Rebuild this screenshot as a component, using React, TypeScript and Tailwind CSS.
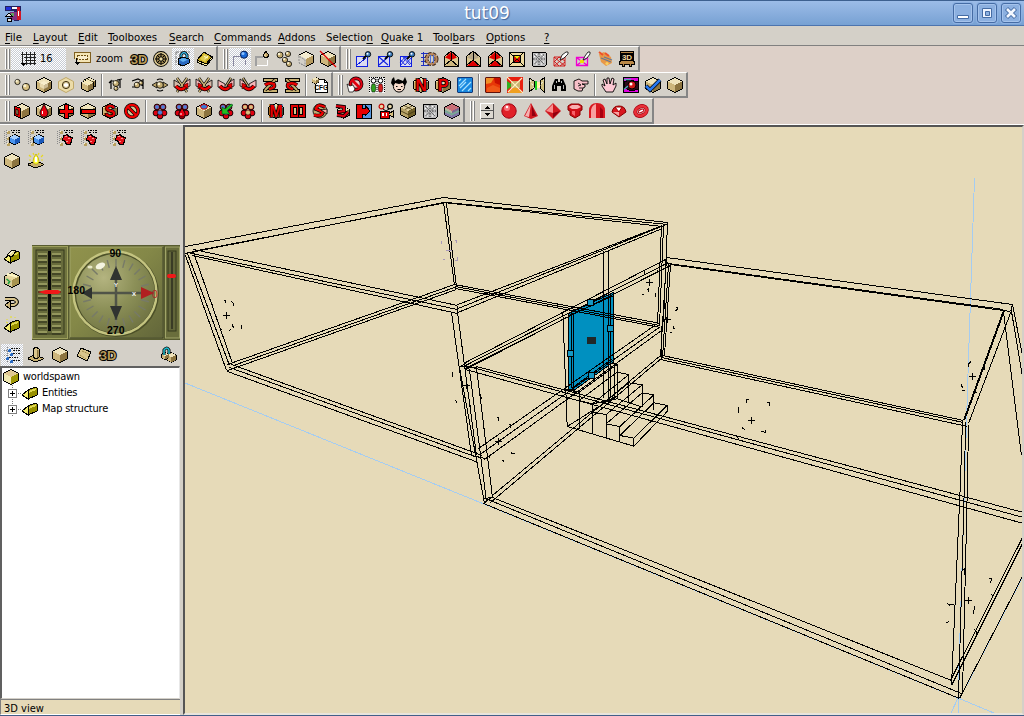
import React from "react";

type P = { d: string; f?: string; s?: string; w?: number };
const Pa = ({ d, f = "none", s = "#000", w = 1 }: P) => <path d={d} fill={f} stroke={s} strokeWidth={w} shapeRendering={w === 1 ? "crispEdges" : undefined} />;

const Letter = ({ t, c = "#e80000", size = 16, x = 8, y = 13.5, o = "#000", w = 1.6 }: { t: string; c?: string; size?: number; x?: number; y?: number; o?: string; w?: number }) => (
  <text x={x} y={y} fontFamily="Liberation Sans, sans-serif" fontWeight="700" fontSize={size} textAnchor="middle" fill={c} stroke={o} strokeWidth={w} paintOrder="stroke">{t}</text>
);

const Cube = ({ c = ["#f0e4bc", "#cdb67c", "#8c7440"], x = 0, y = 0, k = 1 }: { c?: string[]; x?: number; y?: number; k?: number }) => (
  <g transform={`translate(${x} ${y}) scale(${k})`} shapeRendering="crispEdges">
    <path d="M8 0L16 4V12L8 16L0 12V4Z" fill="#000" />
    <path d="M8 1L15 4.5L8 8L1 4.5Z" fill={c[0]} />
    <path d="M1 4.5L8 8V15L1 11.5Z" fill={c[1]} />
    <path d="M15 4.5L8 8V15L15 11.5Z" fill={c[2]} />
  </g>
);
const BLUE = ["#a8d0ff", "#4a94ee", "#1a58b8"];

const Ball = ({ x, y, r = 2.5, c = "#c4ac70" }: { x: number; y: number; r?: number; c?: string }) => (
  <g><circle cx={x} cy={y} r={r} fill={c} stroke="#000" strokeWidth=".8" /><circle cx={x - r / 3} cy={y - r / 3} r={r / 2.4} fill="#f8f0d0" /></g>
);

const RotX = ({ flip = false, v = 0 }: { flip?: boolean; v?: number }) => (
  <g transform={flip ? "translate(16 0) scale(-1 1)" : undefined}>
    <Pa d="M0 3L7 7V12L0 10Z" f={v ? "#f4b8b8" : "#d4b8a8"} w={.8} />
    <Pa d="M16 2L9 7V12L16 9Z" f="#f4b8b8" w={.8} />
    <Pa d={v ? "M13 1L8 9" : "M3 1L13 15M13 1L3 15"} s="#000" w={2.6} />
    <Pa d={v ? "M13 1L8 9" : "M3 1L13 15M13 1L3 15"} s="#cdb67c" w={1.3} />
    <Pa d="M2 9Q7 15.5 12.5 9" w={4} /><Pa d="M2 9Q7 15.5 12.5 9" s="#f00000" w={2.6} />
    <Pa d="M9 8L14 6V12Z" f="#f00000" w={.5} />
  </g>
);
const RotZ = ({ flip = false }: { flip?: boolean }) => (
  <g transform={flip ? "translate(16 0) scale(-1 1)" : undefined}>
    <Pa d="M1 1H15V4H1ZM1 12H15V15H1Z" f="#c8b070" />
    <Pa d="M13 3L3 13" w={3.6} /><Pa d="M13 3L3 13" s="#c8b070" w={2} />
    <Pa d="M3 8Q7 5 12 7Q14 11 7 12" w={3.6} /><Pa d="M3 8Q7 5 12 7Q14 11 7 12" s="#e80000" w={2.4} />
  </g>
);
const House = ({ top, bot }: { top: string; bot: string }) => (
  <g><Pa d="M8 0L15 6V15H1V6Z" f="#dcc890" /><path d="M8 1L14 6.5L8 9L2 6.5Z" fill={top} /><path d="M8 9.5L14 15H2Z" fill={bot} /><Pa d="M8 1V9M1 15L8 9L15 15" /></g>
);
const Molecule = ({ c = "#4a80d8" }: { c?: string }) => (
  <g>{[[5, 4], [11, 4], [4, 10], [12, 10], [8, 13]].map(([x, y]) => <circle key={`${x}${y}`} cx={x} cy={y} r="2.9" fill="#e00010" stroke="#000" strokeWidth=".9" />)}
    <circle cx="5" cy="4" r="2" fill={c} /><circle cx="11" cy="4" r="2" fill={c} /><circle cx="8" cy="9.5" r="2.6" fill={c} stroke="#500" strokeWidth=".8" /></g>
);
const Patch = ({ n }: { n: number }) => (
  <g><Pa d="M1 5H12V15H1Z" f="#dcdcf0" s="#1020e0" />
    {n === 0 && <Pa d="M2 14L11 7" s="#1020e0" />}
    {n === 1 && <Pa d="M2 6L11 14M11 6L2 14" s="#1020e0" w={1.1} />}
    {n === 2 && <Pa d="M1 8L6 14L12 7M1 12L6 6L12 13M3 5L11 14M9 5L2 14" s="#1020e0" w={.9} />}
    <Pa d="M8 8L11 5" w={1.8} /><circle cx="13" cy="3.3" r="2.7" fill="#3878b8" stroke="#000" strokeWidth=".9" /><circle cx="12.5" cy="2.8" r="1" fill="#fff" /></g>
);
const Hatch = () => (
  <g><Pa d="M2 1H14L15 2V14L14 15H2L1 14V2Z" f="#c0c0c0" /><path d="M3.5 3.5L13 13M13 3.5L3.5 13M8 2V6M8 10V14M2 8H6M10 8H14" stroke="#333" strokeDasharray="1.6 1.2" /><path d="M5 3.5H6M10 3.5H11M3 5.5H4M12 5.5H13M3 11H4M12 11H13M5 13H6M10 13H11" stroke="#fff" /></g>
);
const ListIcon = ({ red = false }: { red?: boolean }) => (
  <g shapeRendering="crispEdges"><path d="M.5 1V15M2.5 0V14" stroke="#8a8a8a" strokeDasharray="1 1" /><path d="M3 2H6M3 8H5M3 14H6" stroke="#b8a060" strokeWidth="3" /><path d="M3 1H4M3 7H4M3 13H4" stroke="#fff4d0" /><path d="M7 .5H16" stroke="#000" strokeDasharray="1 1 2 1" /><path d="M8 2.5H16" stroke="#000" strokeDasharray="2 2 1 1" />
    {red ? <g><path d="M6 5L11 4L12 6L16 7L14 15L9 15L8 12L5 11Z" fill="#000" /><path d="M7 6L10 5L11 7L15 8L13 14L10 14L9 11L6 10Z" fill="#e01018" /><path d="M8 6.5H10M11 8.5H13M9 11.5H11" stroke="#ff9090" /></g> : <Cube c={BLUE} x={5} y={4} k={.7} />}
  </g>
);
const Wedge = () => <g shapeRendering="crispEdges"><Pa d="M0 10L6 5V14Z" f="#f4ec70" /><Pa d="M6 5L13 2L15 3V10L6 14Z" f="#989000" /><path d="M7 6L14 3V5L7 8Z" fill="#e0d850" /></g>;

const icons: Record<string, React.ReactNode> = {
  grid: <g shapeRendering="crispEdges"><path d="M2.5 1V13M6.5 1V14M10.5 1V14M14.5 1V14M1 3.5H16M4 6.5H16M5 9.5H16M5 12.5H16" stroke="#222" /><path d="M0 12H6L3 15Z" fill="#000" /></g>,
  zoomrect: <g shapeRendering="crispEdges"><path d="M0 1H17V12H5V11H16V2H1V8H0Z" fill="#806020" /><path d="M1 2H16V11H4V8H1Z" fill="#f4e4b4" /><path d="M3.5 4.5H13.5V8.5H3.5Z" fill="#f8eccc" stroke="#705010" strokeDasharray="2 1" /><path d="M2.5 7V13" stroke="#000" /><path d="M0 11H6L3 14Z" fill="#000" /></g>,
  three: <Letter t="3D" c="#b89a58" size={13} y={12.5} w={2} />,
  wheel: <g><circle cx="8" cy="8" r="6.2" fill="#a08850" stroke="#000" strokeWidth="3.4" /><circle cx="8" cy="8" r="6.2" fill="none" stroke="#dcc890" strokeWidth="1.6" /><path d="M8 2V14M2 8H14M4 4L12 12M12 4L4 12" stroke="#000" strokeWidth="1" /><circle cx="8" cy="8" r="2.2" fill="#e8d8a0" stroke="#000" /></g>,
  lock: <g><path d="M1 1H15M1 1V14" stroke="#777" strokeDasharray="3 1" /><Pa d="M6 8V4Q9 -1 12 4V8" w={3} /><Pa d="M6 8V4Q9 -1 12 4V8" s="#38b8e8" w={1.4} /><Pa d="M3 8L8 6L14 8V12L8 15L3 13Z" f="#2868c0" /><path d="M4 8.5L8 7L13 8.5L8 11Z" fill="#60b0f0" /></g>,
  book: <g><Pa d="M0 9L7 1L15 6L9 13Z" f="#c8a820" /><Pa d="M0 9V11L9 15L15 8V6L9 13Z" f="#fff0a0" /><path d="M3 8L7.5 2.5L12 5.5L8 11Z" fill="#e0cc50" /><path d="M7 5.5L11 7M7.5 8L11 5" stroke="#fff8c0" /></g>,
  selblue: <g><path d="M1.5 15V5.5H8M13.5 9V14" stroke="#8888a0" fill="none" shapeRendering="crispEdges" /><circle cx="12" cy="3.7" r="3.6" fill="#1868d8" stroke="#001040" strokeWidth=".9" /><circle cx="11" cy="2.5" r="1.5" fill="#88c0ff" /></g>,
  selcone: <g><path d="M1 5H9V7H3V15H1Z" fill="#a0a0a0" /><path d="M3 14.5H13.5V9" stroke="#fff" fill="none" /><Pa d="M12 0L15 5L12 7L9 5Z" f="#c0a060" /><path d="M11.5 2V6L10 5Z" fill="#fff0c0" /></g>,
  balls: <g><Ball x={4} y={4} r={3} /><Ball x={12} y={3} r={2.6} /><Ball x={9} y={9} r={2.6} /><Ball x={13} y={13} r={2.6} /></g>,
  openbox: <g><Cube c={["#f4ecd0", "#d4d0c8", "#b89c60"]} /><path d="M0 4L8 8V16L0 12Z" fill="#d4d0c8" /><path d="M1 5V11.5L7 15V9Z" fill="none" stroke="#909090" strokeDasharray="2 1" /></g>,
  nobox: <g><Cube /><path d="M0 0L16 16" stroke="#e00000" strokeWidth="1.2" /></g>,
  cube: <Cube />,
  patch0: <Patch n={0} />, patch1: <Patch n={1} />, patch2: <Patch n={2} />,
  gear: <g><path d="M0 2.5H8M0 6.5H7M0 10.5H7M0 14.5H8M2.5 1V15" stroke="#2030c0" shapeRendering="crispEdges" /><circle cx="10.5" cy="8" r="5" fill="none" stroke="#402818" strokeWidth="4" strokeDasharray="3 1" /><circle cx="10.5" cy="8" r="5" fill="none" stroke="#b88860" strokeWidth="2.2" /><path d="M9.5 4V12M12.5 4V12" stroke="#5070d8" /></g>,
  house1: <House top="#e00000" bot="#cdb67c" />, house2: <House top="#b8a888" bot="#e00000" />, house3: <House top="#e00000" bot="#e00000" />,
  frame: <g><Pa d="M0 1H15V15H0Z" f="#f0dca0" /><Pa d="M0 1L4 5M15 1L11 5M0 15L4 11M15 15L11 11" /><Pa d="M4 4H11V11H4Z" f="#e00000" /><path d="M5 5L11 11M11 5L5 11" stroke="#000" strokeWidth=".8" /><path d="M5 5H11L8 8Z" fill="#ffe000" /></g>,
  hatch: <Hatch />,
  penred: <g><path d="M1 6H12V15H1ZM1 6L12 15M12 6L1 15M6 6L12 10M1 10L6 15M6 6L1 11M12 11L7 15" stroke="#d01010" fill="none" strokeWidth=".9" /><Pa d="M7 9L9 4L13 1L15 1V3L11 7Z" f="#fff" w={.8} /></g>,
  penpink: <g><path d="M1.5 6.5H12.5V14.5H1.5ZM2 7L12 14M12 7L2 14" stroke="#f000d0" strokeWidth="1.3" fill="none" /><path d="M5 9H9V12H5Z" fill="#f0e000" /><Pa d="M8 9L10 5L13 1L15 1V3L12 7Z" f="#fff" w={.8} /></g>,
  palette: <g><path d="M2 3L7 1L14 6L15 12L9 15L4 11Z" fill="#e89848" /><path d="M2 1L6 4M8 2L12 5" stroke="#f05028" strokeWidth="2" /><path d="M4 7L14 11M7 6L15 9" stroke="#607898" strokeWidth="1.2" /><circle cx="10" cy="12.5" r="1.6" fill="#f8d060" /></g>,
  sign3d: <g><Pa d="M1 0H14V10H15V13H12V15H10V13H5V15H3V13H0V10H1Z" f="#b88848" /><path d="M2 2H14V10H2Z" fill="#000" /><Letter t="3D" c="#f0d8a0" size={8} y={9} o="none" w={0} /></g>,
  twocubes: <g><Ball x={3.5} y={5} r={2.6} c="#d8c898" /><Ball x={12} y={10} r={3.6} c="#d8c080" /></g>,
  cubehi: <g><Cube /><path d="M8 4L12 6V10L8 12L4 10V6Z" fill="#fff6d8" opacity=".55" /></g>,
  cubehole: <g><path d="M8 .5L15.5 4.5V11.5L8 15.5L.5 11.5V4.5Z" fill="#ecdca8" stroke="#c0a868" /><circle cx="8" cy="8" r="3.6" fill="#d8c898" stroke="#403010" /><path d="M6 7L8 6L10 7V9L8 10L6 9Z" fill="#fff" /></g>,
  cubestack: <g><Cube x={3} y={0} k={.8} /><Cube x={1} y={2} k={.82} /><path d="M3.5 3.5L10 7M6 2L13 5.5" stroke="#fff0b0" fill="none" /></g>,
  rl: <g><Pa d="M3 12V4L1 6M3 4H6M12 2V11M9 3L14 2" w={1.2} /><Ball x={8} y={6.5} r={3} /><Ball x={8} y={11.5} r={2} /></g>,
  rr: <g><Pa d="M2 4L8 2L12 4V9M13 2V12M2 10H6" w={1.2} /><Ball x={7} y={8} r={2.8} /><Ball x={11} y={6} r={2} /></g>,
  rc: <g><Pa d="M0 8L5 5V11ZM16 8L11 5V11Z" f="#bca468" w={.8} /><Ball x={8} y={8} r={3.3} /><Pa d="M5 13Q8 15 11 13M5 3Q8 1 11 3" w={1.2} /></g>,
  x1: <RotX />, x2: <RotX flip />, v1: <RotX v={1} />, v2: <RotX flip v={1} />, z1: <RotZ />, z2: <RotZ flip />,
  cfg: <g><Pa d="M3 2H12L15 5V15H3Z" f="#fff" /><Pa d="M12 2V5H15" /><Cube x={0} y={0} k={.45} /><Letter t="CFG" c="#000" size={6.5} x={9.3} y={12.5} w={0} o="none" /></g>,
  noq: <g><circle cx="9" cy="7" r="5.6" fill="#f4c8c8" stroke="#000" strokeWidth="3.6" /><circle cx="9" cy="7" r="5.6" fill="none" stroke="#e00010" strokeWidth="2.2" /><Pa d="M5 3L13 11" s="#e00010" w={2.6} /><Pa d="M0 7L3 9L6 8L8 12L6 15H2Z" f="#fff" w={.7} /></g>,
  people: <g><path d="M0 0H16V16H0Z" fill="#f4f4f4" /><path d="M.5 0V16M8 0V16M15.5 0V16M0 .5H16" stroke="#000" strokeDasharray="1 1" /><circle cx="4.5" cy="3.7" r="2.3" fill="#fff" stroke="#000" /><circle cx="11.5" cy="3.7" r="2.3" fill="#fff" stroke="#000" /><path d="M3 7H6L7 11L6 15H3L2 11Z" fill="#30a020" stroke="#000" strokeWidth=".5" /><path d="M10 7H13L14 11L13 15H10L9 11Z" fill="#d02020" stroke="#000" strokeWidth=".5" /></g>,
  face: <g><circle cx="8" cy="9.5" r="5.6" fill="#f8dccc" stroke="#000" /><path d="M0 6L1 2L3 0L4 4L7 2L12 4L14 0L16 5L14 9L12 6L8 7L4 6L2 9Z" fill="#000" /><path d="M5 9.5H6.5M10 9.5H11.5M6.5 12.5H10" stroke="#000" strokeWidth="1.1" /></g>,
  N: <g><Cube /><Letter t="N" /></g>, Pp: <g><Cube /><Letter t="P" /></g>,
  water: <g><path d="M1 0H15L16 1V15L15 16H1L0 15V1Z" fill="#103878" /><path d="M1 1H15V15H1Z" fill="#1888e0" /><path d="M2 9L9 2M5 14L14 5M2 4L4 2M11 14L14 11M3 11L9 5" stroke="#a8e0ff" strokeWidth="1.2" /></g>,
  lava: <g><path d="M1 0H15L16 1V15L15 16H1L0 15V1Z" fill="#601008" /><path d="M1 1H15V15H1Z" fill="#e83808" /><path d="M1 1H9L6 6L1 7Z" fill="#f09028" /><path d="M9 1H15V8L10 6Z" fill="#c81000" /><path d="M2 11L8 8L15 11V15H2Z" fill="#f05818" /></g>,
  envelope: <g><path d="M0 0H16V16H0Z" fill="#e82010" /><path d="M0 4L6 8L0 13Z" fill="#30b020" /><path d="M1 16L8 9L15 16Z" fill="#f0a020" /><path d="M4 4H13V11H4Z" fill="#c8b070" /><path d="M0 0L16 16M15 1L1 15" stroke="#fff0c0" strokeWidth="1.2" /></g>,
  gate: <g><Pa d="M0 1L5 4V11L0 15ZM15 1L11 4V11L15 15Z" f="#d0c080" /><path d="M6 5H11V11H6Z" fill="#fff0a0" /><path d="M7 4V13" stroke="#20d020" strokeWidth="2" /><path d="M1 3L5 11M10 10L15 3" stroke="#fff" strokeDasharray="2 2" /></g>,
  binoc: <g><path d="M4 2H7V5H9V2H12L15 9V14H10V9H6V14H1V9Z" fill="#000" /><path d="M3.5 8V12M12.5 8V12M5.5 4V6M10.5 4V6" stroke="#bbb" /></g>,
  finger: <g><path d="M1 4L6 2L9 4H15V7H9L12 8V10L10 11L9 14H5L1 12Z" fill="#f8c0c8" stroke="#000" strokeWidth=".9" /><path d="M5 6L8 8L5 9M6 11H10" stroke="#000" strokeWidth=".8" fill="none" /></g>,
  hand: <path d="M5 15L1 9L1 7L4 9L2 3L4 2L6 7L6 1H8L9 7L11 1L13 2L12 8L15 6V9L12 15Z" fill="#fcc8d4" stroke="#000" strokeWidth=".9" />,
  eye: <g><path d="M0 0H16V16H0Z" fill="#000" /><path d="M1 1H15V15H1Z" fill="#e000e0" /><Pa d="M1 5L6 3L15 5V12L9 14L1 11Z" f="#300818" /><circle cx="9" cy="8" r="4" fill="#d01818" stroke="#000" /><circle cx="8" cy="7" r="1.5" fill="#fff" /><path d="M1 12.5L5 9M1 2.5H8" stroke="#50a8b8" strokeWidth="1.5" /></g>,
  check: <g><Cube /><Pa d="M1 9L5 13L15 3" w={4} /><Pa d="M1 9L5 13L15 3" s="#2878f0" w={2.6} /></g>,
  rdoor: <g><Cube /><Pa d="M0 3L6 5V15L0 12Z" f="#e00000" /><Pa d="M2 6L4 7V12L2 11Z" f="#c8b070" w={.9} /></g>,
  drop: <g><Cube /><Pa d="M8 1L12 9Q12 14 8 14Q4 14 4 9Z" f="#e80010" w={.9} /><path d="M6.5 8V11" stroke="#fff" /></g>,
  plus: <g><Cube /><Pa d="M6 1H10V6H15V10H10V15H6V10H1V6H6Z" f="#f00000" /></g>,
  minus: <g><Cube /><Pa d="M1 6H15V10H1Z" f="#f00000" /></g>,
  S: <g><Cube /><Letter t="S" /></g>,
  forbid: <g><circle cx="8" cy="8" r="6.2" fill="#d8c898" stroke="#000" strokeWidth="3.6" /><Pa d="M4 4L12 12" w={3.6} /><circle cx="8" cy="8" r="6.2" fill="none" stroke="#f00000" strokeWidth="2.2" /><Pa d="M4 4L12 12" s="#f00000" w={2.2} /></g>,
  mol1: <Molecule />,
  mol2: <g><Molecule /><Pa d="M8 5L11 10Q12 14 8 14Q4 14 5 10Z" f="#e80010" w={.8} /><path d="M7 10V12" stroke="#fff" /></g>,
  mol3: <g><Cube /><path d="M4 3L8 1L12 3L10 6H6Z" fill="#3878d8" stroke="#d00000" /></g>,
  mol4: <g><Molecule /><path d="M15 2L9 8L12 11H4V4L7 6L13 1Z" fill="#20c020" stroke="#042" strokeWidth=".6" /></g>,
  mol5: <Molecule c="#d8c080" />,
  M: <g><Cube /><Letter t="M" size={16} /></g>,
  door2: <g><Pa d="M0 1H15V14H0Z" f="#e00000" /><Pa d="M3 4H6V11H3ZM9 4H12V11H9Z" f="#d8c48c" /><Pa d="M8 1V14" /></g>,
  spin: <g><Ball x={8} y={8} r={7} /><Pa d="M13 4Q5 0 4 6L11 9Q10 14 2 12" w={3.8} /><Pa d="M13 4Q5 0 4 6L11 9Q10 14 2 12" s="#f00000" w={2.4} /><Pa d="M9 7L15 6V11Z" f="#f4b0a8" w={.8} /></g>,
  spin2: <g><Cube x={3} y={3} k={.8} /><Pa d="M2 3L10 4V8L4 9M3 12L10 13L14 9" w={3.8} /><Pa d="M2 3L10 4V8L4 9M3 12L10 13L14 9" s="#e00010" w={2.2} /></g>,
  arrow: <g><Pa d="M0 1H15V15H0Z" f="#5898e0" /><Pa d="M0 1H6V5H9V2L14 8L9 13V11H6V15H0Z" f="#e80000" /></g>,
  camera: <g><circle cx="3.5" cy="3.5" r="2.4" fill="#e8d8a8" stroke="#c00000" strokeWidth="1.2" /><circle cx="12" cy="3.5" r="2.4" fill="#e8d8a8" stroke="#000" strokeWidth="1.2" /><path d="M5 6L8 8L11 6" stroke="#000" fill="none" /><Pa d="M2 8H11V15H2Z" f="#e00000" /><path d="M4 10H6V13H4ZM8 10H9V13H8Z" fill="#fff" /><Pa d="M11 11L15 8V14L11 12" f="#d8c080" /></g>,
  crate: <g><Cube c={["#e0d0a0", "#b8a468", "#706028"]} /><path d="M4 2.5L12 6.5M5 6.5L12 3M1 8L8 11.5L15 8" stroke="#403410" strokeWidth=".8" fill="none" /></g>,
  rainbow: <g><Cube c={["#c87078", "#b8b8a0", "#806890"]} /><path d="M1 8L8 11.5L15 8" stroke="#78a898" strokeWidth="2" fill="none" /><path d="M1 10.5L8 14L15 10.5" stroke="#8078a8" strokeWidth="2" fill="none" /></g>,
  updown: <g shapeRendering="crispEdges"><path d="M1 0H15V16H1Z" fill="#fff" /><path d="M2 1H15V16H2Z" fill="#555" /><path d="M2 1H14V7H2ZM2 8H14V15H2Z" fill="#dcd8d0" /><path d="M5 6L8 3L11 6ZM5 10L8 13L11 10Z" fill="#000" /></g>,
  sphere: <g><circle cx="8" cy="8" r="7.2" fill="#e02028" stroke="#a00010" /><circle cx="6" cy="5" r="3" fill="#f87078" /><circle cx="6" cy="4" r="1.2" fill="#fff" /></g>,
  cone: <g><path d="M8 0L15 13L8 16L1 13Z" fill="#d01820" /><path d="M8 1L6 14L2 13Z" fill="#f8b0b0" /><path d="M9 3L13 13H9Z" fill="#900010" /></g>,
  octa: <g><path d="M8 0L16 8L8 16L0 8Z" fill="#d01820" /><path d="M8 1L1 8L8 10Z" fill="#f89090" /><path d="M8 15L8 10L15 8Z" fill="#900010" /></g>,
  cyl: <g><path d="M1 3L4 1H12L15 3V7L13 8V12L8 15L3 12V8L1 7Z" fill="#d01018" stroke="#800" /><path d="M2 4L5 2H11L14 4L10 6H5Z" fill="#f8b0b0" /><path d="M5 8H8V13L5 11Z" fill="#f86068" /></g>,
  arch: <g><path d="M0 15V8Q0 0 8 0Q16 0 16 8V15Z" fill="#d81820" /><path d="M2 15V7Q3 2 7 1V15Z" fill="#f8a0a0" /><path d="M11 15V4L14 7V15Z" fill="#a80010" /></g>,
  cut: <g><path d="M1 9Q2 3 8 3Q14 3 15 9L8 14Z" fill="#d81820" stroke="#800" /><path d="M4 4L8 9L11 4Z" fill="#fff" stroke="#a00" /><path d="M2 9L8 13V9Z" fill="#f8a0a0" /></g>,
  torus: <g transform="rotate(-25 8 8)"><ellipse cx="8" cy="8" rx="6" ry="4.6" fill="none" stroke="#a80010" strokeWidth="4" /><ellipse cx="8" cy="8" rx="6" ry="4.6" fill="none" stroke="#e83038" strokeWidth="2.6" /><ellipse cx="8" cy="8" rx="3" ry="1.4" fill="#fff" stroke="#c00010" /></g>,
  listb: <ListIcon />, listr: <ListIcon red />,
  bulb: <g><Pa d="M0 11L8 8L15 11V12L8 15L0 12Z" f="#c8b070" /><path d="M8 1Q11 5 11 8.5L9.5 11H6.5L5 8.5Q5 5 8 1Z" fill="#ffff40" stroke="#c0a800" strokeWidth=".8" /><path d="M7 4H9V9H7Z" fill="#fff" /><path d="M1 2L3 4M13 4L15 2M1 7H3M13 7H15M5 0L6 2M11 0L10 2" stroke="#e8d820" strokeWidth="1.2" /></g>,
  tcube: <Cube c={["#e0c894", "#f0e8b0", "#a09808"]} />,
  wedge: <Wedge />,
  folder: <g><Wedge /><Pa d="M3 6L8 1L12 2L8 8Z" f="#e8dc98" /><path d="M5 5.5L9 2" stroke="#fff" /></g>,
  bag: <g><Cube c={["#e8d8a0", "#d8cc98", "#a89450"]} /><path d="M3 2L13 4.5" stroke="#fff8c8" strokeWidth="2" /><path d="M2.5 7L5 9M6 9L4 12" stroke="#20a040" strokeWidth="1.6" /></g>,
  undo: <g><Pa d="M1 4H10Q16 7 10 10H6" w={4} /><Pa d="M1 4H10Q16 7 10 10H6" s="#d8c48c" w={2} /><Pa d="M6 6V14L1 10Z" f="#cdb67c" /></g>,
  spark: <g><Wedge /><path d="M3 1V2M7 -2V0M11 -1V0M2 4L4 5" stroke="#e8e020" /></g>,
  tree: <g shapeRendering="crispEdges"><path d="M3.5 0V16M0 3.5H4M0 8.5H4M0 12.5H4" stroke="#888" strokeDasharray="1 1" /><path d="M7 1.5H16M9 3.5H16M9 6.5H16M5 10.5H15M9 13.5H16" stroke="#111" strokeDasharray="2 1 1 1" /><path d="M4 2H7V5H4ZM6 6H9V9H6ZM2 10H5V13H2ZM6 13H9V16H6Z" fill="#2868c0" /><path d="M4 2H5V3H4ZM6 6H7V7H6ZM2 10H3V11H2ZM6 13H7V14H6Z" fill="#b0dcff" /></g>,
  chess: <g><Pa d="M0 11L6 8L15 11V12L8 15L0 12Z" f="#c8b070" /><Pa d="M5 2L8 0L11 2V10L8 12L5 10Z" f="#d8c48c" /><path d="M9 3V11L10.5 10V3Z" fill="#8c7440" /></g>,
  sheet: <g><Pa d="M5 1L15 5L11 14L1 9Z" f="#d8c48c" w={1} /><path d="M4 8L10 12M6 4L13 7" stroke="#a08848" strokeDasharray="2 1" /></g>,
  lockbox: <g><Cube x={5} y={5} k={.68} /><Cube x={0} y={5} k={.5} /><Pa d="M3 8V3Q6 -1 8 3V7" w={3} /><Pa d="M3 8V3Q6 -1 8 3V7" s="#20c0d0" w={1.5} /></g>,
};

const Icon = ({ n }: { n: string }) => <svg viewBox="0 0 16 16" className="h-4 w-4 shrink-0 overflow-visible">{icons[n]}</svg>;
const Slot = ({ n, on = false }: { n: string; on?: boolean }) => (
  <div className={`flex h-[22px] w-[22px] shrink-0 items-center justify-center ${on ? "bg-[repeating-conic-gradient(#ffffff_0_25%,#c8ccd4_0_50%)] bg-[length:2px_2px]" : ""}`}><Icon n={n} /></div>
);
const Sep = () => <div className="flex h-[22px] w-1.5 shrink-0 justify-center"><div className="w-px bg-[#808080]" /><div className="w-px bg-white" /></div>;
const Bar = ({ list, children }: { list?: string; children?: React.ReactNode }) => (
  <div className="flex h-[26px] shrink-0 items-center border-t border-r-2 border-b-2 border-t-white border-r-[#858585] border-b-[#858585] bg-[#d4d0c8]">
    <div className="flex h-5 w-[11px] shrink-0 gap-px pl-[5px]"><div className="w-0.5 border-r border-l border-r-[#808080] border-l-white" /><div className="w-0.5 border-r border-l border-r-[#808080] border-l-white" /></div>
    {children}
    {list?.split(" ").map((n, i) => n === "|" ? <Sep key={i} /> : <Slot key={i} n={n.replace("*", "")} on={n.startsWith("*")} />)}
  </div>
);

const menus: [string, string, string, string][] = [
  ["", "F", "ile", "w-[28px]"], ["", "L", "ayout", "w-[45px]"], ["", "E", "dit", "w-[30px]"], ["", "T", "oolboxes", "w-[61px]"],
  ["", "S", "earch", "w-[45px]"], ["", "C", "ommands", "w-[64px]"], ["", "A", "ddons", "w-[48px]"], ["Selectio", "n", "", "w-[55px]"],
  ["", "Q", "uake 1", "w-[52px]"], ["Tool", "b", "ars", "w-[53px]"], ["", "O", "ptions", "w-[58px]"], ["", "?", "", "w-[10px]"],
];

const lines: number[][] = [
  [185, 246, 443, 197], [443, 197, 667, 222], [185, 253, 443, 202], [192, 251, 446, 202], [443, 202, 662, 226], [446, 202, 667, 224],
  [193, 249, 457, 305], [187, 252, 457, 309], [192, 255, 457, 313], [185, 255, 226, 370], [187, 253, 229, 365], [193, 252, 232, 363],
  [227, 364, 454, 284], [233, 365, 457, 286], [227, 370, 456, 289], [231, 364, 482, 455], [229, 367, 477, 457], [227, 371, 478, 462],
  [443, 202, 454, 285], [446, 203, 456, 287], [454, 284, 660, 323], [455, 286, 659, 325], [455, 288, 660, 327],
  [661, 225, 657, 324], [663, 225, 659, 326], [667, 222, 663, 322], [661, 325, 661, 357],
  [455, 305, 662, 225], [455, 309, 666, 224], [455, 313, 662, 228], [451, 312, 471, 455], [457, 305, 457, 312], [457, 312, 476, 455],
  [465, 362, 667, 258], [465, 365, 668, 262], [465, 368, 670, 265], [465, 369, 566, 317],
  [666, 257, 1012, 304], [670, 264, 1010, 311], [668, 263, 1003, 309],
  [666, 258, 660, 357], [668, 264, 662, 357], [670, 264, 664, 355],
  [662, 355, 963, 420], [661, 357, 963, 422], [660, 359, 967, 426],
  [1003, 310, 963, 420], [1004, 310, 964, 420], [1011, 310, 968, 423], [1012, 304, 1010, 311],
  [1012, 304, 1023, 360], [1011, 311, 1023, 382], [1003, 311, 1021, 455],
  [962, 420, 960, 480], [960, 480, 951, 685], [968, 425, 967, 480], [967, 480, 962, 693], [965, 422, 964, 480], [964, 480, 958, 698],
  [492, 497, 951, 680], [485, 498, 961, 693], [483, 503, 959, 698],
  [959, 698, 1023, 574], [950, 680, 1023, 535], [951, 685, 1023, 541],
  [459, 367, 484, 503], [469, 369, 486, 501], [476, 367, 492, 497], [483, 503, 491, 497], [459, 367, 466, 362], [483, 498, 492, 497],
  [478, 448, 657, 323], [481, 453, 660, 326], [484, 459, 661, 330], [492, 495, 660, 355], [490, 502, 662, 357],
  [476, 366, 1023, 512], [472, 367, 1023, 517], [465, 369, 1023, 523], [459, 366, 476, 367], [471, 455, 485, 458],
  [603, 250, 603, 397], [608, 250, 608, 400],
];
const stairs =
  "M367 305L376 540L380 648L580 707V683L538 675V695M538 675V648L497 640V685M497 640V612L456 605V670M456 605V580L416 570M418 657L416 545L376 537M515 458L530 462V565M530 485L565 492V575M565 517L605 523V590M605 547L640 553V598M640 577L680 585V603L580 707M416 545L530 462M416 570L530 485M456 580L565 492M456 605L565 517M497 612L605 523M497 640L605 547M538 648L640 553M538 675L640 577M580 683L680 585M456 580L530 565L605 590M380 648L520 560M510 455V560M522 458V560";
const crosses = [[226, 315], [649, 282], [667, 319], [751, 420], [972, 376], [968, 600], [466, 385], [498, 441]];
const ticks =
  "M223 300h2v2M231 301l2 2v2M232 323v3l2 1M241 324v4M228 331l2-2M220 328l2 2M211 303l2 3M644 270v3M657 269v3M646 290l2-2v3M641 294h2M655 292v4M675 307h2v2l-2 1M674 328h-1v-3M665 307v5M669 332h2M738 406v6M746 402v-3h2M766 402h3v3M742 426v2l3 1M761 431l4 1v-3M735 436h2l1 3M970 361l-1 2h-1v3M961 383v3l2 1M961 390h3M975 391l1 2M984 365v4M452 371v5M480 393v4l2 1M468 394v4M470 404v4M455 400l2 3M498 420v-3h-2M508 424h2v3M484 427v5M511 451v2h3M502 460l2 1M488 456l2 1M988 578h3l-1 5M974 606l-1 8M947 603l3 3M948 604h5M946 622l3-1M974 629l2 2v3M962 570l2-2v6M991 594l2 3";

const Room = () => (
  <svg viewBox="185 127 837 586" width="837" height="586" shapeRendering="crispEdges" fill="none" className="block bg-[#e6dab8]">
    <path d="M974.5 178L968 374L958 698M185 383L484 504L958 698L951 713M958.5 698V713M958 698L994 713M960 698L1023 576" stroke="#a4ccf2" />
    <path d="M568 313L613 292V362L573 391L569 389Z" fill="#0090c0" />
    <g stroke="#000">
      {lines.map((l, i) => <line key={i} x1={l[0] + .5} y1={l[1] + .5} x2={l[2] + .5} y2={l[3] + .5} />)}
      <path d="M568.5 313.5L613.5 292.5V362L573 391L568.5 389ZM571.5 313V388M573.5 313V390M610.5 294V363M568 316L613 296M572 388L612 359" />
      <path d={stairs} transform="translate(440.5 210.5) scale(.33333)" vectorEffect="non-scaling-stroke" />
      {crosses.map(([x, y]) => <path key={x} d={`M${x - 3} ${y + .5}h7M${x + .5} ${y - 3}v7`} />)}
      <path d={ticks} transform="translate(.5 .5)" />
      <path d="M587.5 299.5h6v6h-6ZM607.5 325.5h6v6h-6ZM567.5 350.5h6v6h-6ZM588.5 372.5h6v6h-6Z" fill="#1698c4" />
    </g>
    <path d="M587 337h9v7h-9Z" fill="#202828" />
    <path d="M441 241v3M455 240h1v3M446 250h6M443 259h2M457 257v3h-2" stroke="#a898b8" />
  </svg>
);

const Compass = () => (
  <svg viewBox="0 0 148 95" width="148" height="95" className="block shrink-0">
    <defs>
      <linearGradient id="olive" x1="0" y1="0" x2="1" y2="1"><stop offset="0" stopColor="#90924c" /><stop offset=".45" stopColor="#848848" /><stop offset="1" stopColor="#62663a" /></linearGradient>
      <radialGradient id="dial" cx=".35" cy=".3" r=".8"><stop offset="0" stopColor="#b4b480" /><stop offset=".5" stopColor="#8c9058" /><stop offset="1" stopColor="#6c7040" /></radialGradient>
    </defs>
    <rect width="148" height="95" fill="#585c30" />
    <rect x=".5" y="1.5" width="35" height="92" fill="#70743f" stroke="#9c9f5c" />
    <rect x="4" y="5" width="28" height="84" fill="#686c3c" stroke="#34381c" />
    {Array.from({ length: 14 }, (_, i) => <path key={i} d={`M6 ${9 + i * 6}H15M20 ${9 + i * 6}H29`} stroke="#a3a568" strokeWidth="1.5" />)}
    {Array.from({ length: 14 }, (_, i) => <path key={i} d={`M6 ${11 + i * 6}H15M20 ${11 + i * 6}H29`} stroke="#3a3d20" strokeWidth="1.5" />)}
    <path d="M17.5 6V86" stroke="#080808" strokeWidth="3" />
    <path d="M6 47L14 45H26L29 47L26 49H13Z" fill="#f01818" />
    <rect x="38" y="2" width="93" height="91" fill="url(#olive)" stroke="#a0a468" />
    <path d="M38 93H131V2" stroke="#30341a" fill="none" />
    <circle cx="84" cy="49" r="43" fill="#4c5028" /><circle cx="83" cy="48" r="41.5" fill="none" stroke="#c4c480" strokeWidth="2.4" /><circle cx="83.5" cy="48.5" r="39.5" fill="url(#dial)" />
    {Array.from({ length: 24 }, (_, i) => <path key={i} d="M84 14V22" transform={`rotate(${i * 15} 84 48)`} stroke="#777a68" strokeWidth="1.4" />)}
    <ellipse cx="68" cy="21" rx="5" ry="3" fill="#f4f4e0" transform="rotate(-25 68 20)" /><ellipse cx="58" cy="22" rx="2.6" ry="1.5" fill="#e8e8c8" />
    <path d="M56 48H122M84 24V75" stroke="#505448" strokeWidth="2.5" />
    <path d="M78 35L84 21L90 35ZM78 61L84 75L90 61ZM60 42L50 48L60 54Z" fill="#303330" />
    <path d="M109 42L122 48L109 54Z" fill="#b02020" />
    <g fontFamily="Liberation Sans, sans-serif" fontWeight="700" fontSize="10.5">
      <text x="77.500" y="12">90</text><text x="35.500" y="49">180</text><text x="75" y="89">270</text><text x="120" y="53" fill="#b02828" fontWeight="400" fontSize="10.5">0</text>
      <text x="82" y="42" fill="#fff" fontSize="6">Y</text><text x="100" y="51" fill="#fff" fontSize="6">X</text>
    </g>
    <rect x="133.500" y="2" width="14" height="91" fill="#6a6e3c" stroke="#a0a468" /><rect x="136" y="6" width="8" height="80" fill="#62663a" stroke="#34381c" /><path d="M140 7V84" stroke="#101010" />
    <rect x="135" y="29" width="9" height="4" rx="2" fill="#f01818" />
  </svg>
);

const TreeRow = ({ label }: { label: string }) => (
  <div className="flex h-4 items-center pl-[5px]">
    <svg width="15" height="16" viewBox="0 0 15 16" shapeRendering="crispEdges" className="shrink-0"><path d="M5.5 0V16M9 8.500H15" stroke="#777" strokeDasharray="1 1" /><rect x="1.500" y="4.500" width="8" height="8" fill="#fff" stroke="#808080" /><path d="M3 8.500H8M5.500 6V11" stroke="#000" /></svg>
    <Icon n="wedge" /><span className="ml-[4px]">{label}</span>
  </div>
);

const WinBtn = ({ children }: { children: React.ReactNode }) => (
  <div className="flex h-5 w-5 items-center justify-center rounded-[3px] border border-[#456ca4] bg-[#8cb0e0] shadow-[0_0_0_1px_#8db1e2,inset_0_0_0_1px_#a5c3ec]"><svg width="14" height="14" viewBox="0 0 14 14" fill="none">{children}</svg></div>
);

export default function App() {
  return (
    <div className="flex h-[716px] w-[1024px] flex-col overflow-hidden bg-[#d4d0c8] font-['DejaVu_Sans_Condensed','DejaVu_Sans',sans-serif] text-[11px] leading-4 text-black">
      <header className="flex h-[26px] shrink-0 items-center border-t border-b border-t-[#3d6090] border-b-[#4c74ae] bg-linear-to-b from-[#9cbce8] to-[#77a1d3] pr-[3px] pl-[5px]">
        <svg viewBox="0 0 16 16" className="mt-0.5 h-4 w-4" shapeRendering="crispEdges"><path d="M0 0H16V5H14V15H9V5H0Z" fill="#202060" /><path d="M1 1H6V4H1Z" fill="#2030d8" /><path d="M7 1H12V3H7Z" fill="#fff" /><path d="M12 1H15V5H16V14H12Z" fill="#d01828" /><path d="M13 5H14V10H13Z" fill="#fff" /><path d="M5 6H12V14H5Z" fill="#803080" /><path d="M6 7H9V10H6Z" fill="#60a060" /><path d="M1 10L4 7L7 10ZM2 12H6V15H2Z" fill="#e0e0e0" stroke="#000" /></svg>
        <div className="flex-1 text-center font-['DejaVu_Sans'] text-[17px] leading-6 font-medium text-white [text-shadow:1px_1px_1px_#40649a]">tut09</div>
        <div className="flex gap-1"><WinBtn><path d="M1.500 9.500H12.500V12.500H1.500Z" fill="#fff" stroke="#456ca4" /></WinBtn><WinBtn><path d="M2.500 2.500H11.500V11.500H2.500Z" fill="#eef4ff" stroke="#456ca4" /><path d="M5.500 5.500H9.500V9.500H5.500Z" fill="#8cb0e0" stroke="#456ca4" /></WinBtn><WinBtn><path d="M2.500 2.500L11.500 11.500M11.500 2.500L2.500 11.500" stroke="#456ca4" strokeWidth="4.500" /><path d="M3 3L11 11M11 3L3 11" stroke="#f4f8ff" strokeWidth="2.600" /></WinBtn></div>
      </header>
      <nav className="flex h-5 shrink-0 items-center border-b border-[#808080] pt-[5px] pl-[5px]">
        {menus.map(([a, u, b, w], i) => <div key={i} className={`shrink-0 text-[11.3px] whitespace-nowrap ${w}`}>{a}<span className="underline underline-offset-2">{u}</span>{b}</div>)}
      </nav>
      <div className="h-[78px] shrink-0 bg-[#ddd0c8]">
        <div className="flex">
          <Bar>
            <div className="flex h-[22px] w-[55px] items-center gap-1 bg-[repeating-conic-gradient(#ffffff_0_25%,#c8ccd4_0_50%)] bg-[length:2px_2px] pl-[9px]"><Icon n="grid" />16</div>
            <div className="flex h-[22px] w-[62px] items-center gap-1.5 pl-2"><Icon n="zoomrect" />zoom</div>
            <Slot n="three" /><Slot n="wheel" /><Slot n="lock" on /><Slot n="book" />
          </Bar>
          <Bar list="*selblue selcone balls openbox nobox" />
          <Bar list="patch0 patch1 patch2 gear house1 house2 house3 frame hatch penred penpink palette sign3d" />
        </div>
        <div className="flex">
          <Bar list="twocubes cubehi cubehole cubestack | rl rr rc x1 x2 v1 v2 z1 z2 | cfg" />
          <Bar list="noq people face N Pp water | lava envelope gate binoc finger | hand eye check cube" />
        </div>
        <div className="flex">
          <Bar list="rdoor drop plus minus S forbid | mol1 mol2 mol3 mol4 mol5 | M door2 spin spin2 arrow camera crate hatch rainbow" />
          <Bar list="updown sphere cone octa cyl arch cut torus" />
        </div>
      </div>
      <div className="flex min-h-0 flex-1 border-t border-white">
        <aside className="flex w-[183px] shrink-0 flex-col">
          <div className="flex h-6 items-center pt-0.5 pl-1"><Icon n="listb" /><div className="w-2" /><Icon n="listb" /><div className="w-[13px]" /><Icon n="listr" /><div className="w-2" /><Icon n="listr" /><div className="w-[13px]" /><Icon n="listr" /></div>
          <div className="flex h-6 items-center gap-2 pl-1"><Icon n="cube" /><Icon n="bulb" /></div>
          <div className="flex-1" />
          <div className="flex h-[96px] shrink-0">
            <div className="flex w-8 flex-col gap-[7px] pt-1 pl-1"><Icon n="folder" /><Icon n="bag" /><Icon n="undo" /><Icon n="spark" /></div>
            <Compass />
          </div>
          <div className="flex h-[25px] shrink-0 items-center gap-0.5 pt-0.5 pl-[1px]"><Slot n="tree" on /><Slot n="chess" /><Slot n="cube" /><Slot n="sheet" /><Slot n="three" /><div className="w-[35px]" /><Slot n="lockbox" /></div>
          <div className="h-[333px] w-[180px] shrink-0 border border-t-2 border-l-2 border-t-[#606060] border-r-[#e8e8e8] border-b-[#d4d0c8] border-l-[#606060] bg-white pt-px tracking-[-0.22px]">
            <div className="flex h-4 items-center gap-1 pl-px"><Icon n="tcube" />worldspawn</div>
            <TreeRow label="Entities" /><TreeRow label="Map structure" />
          </div>
          <div className="h-4 w-[180px] shrink-0 border-t border-b border-l border-t-[#808080] border-b-white border-l-[#808080] bg-[#e6dab8] pt-px pl-[3px] leading-[15px]">3D view</div>
        </aside>
        <main className="flex-1 border-2 border-t-[#555] border-r-[#d4d0c8] border-b-[#e8e4dc] border-l-[#555]"><Room /></main>
      </div>
      <footer className="h-px shrink-0 bg-[#435f88]" />
    </div>
  );
}
